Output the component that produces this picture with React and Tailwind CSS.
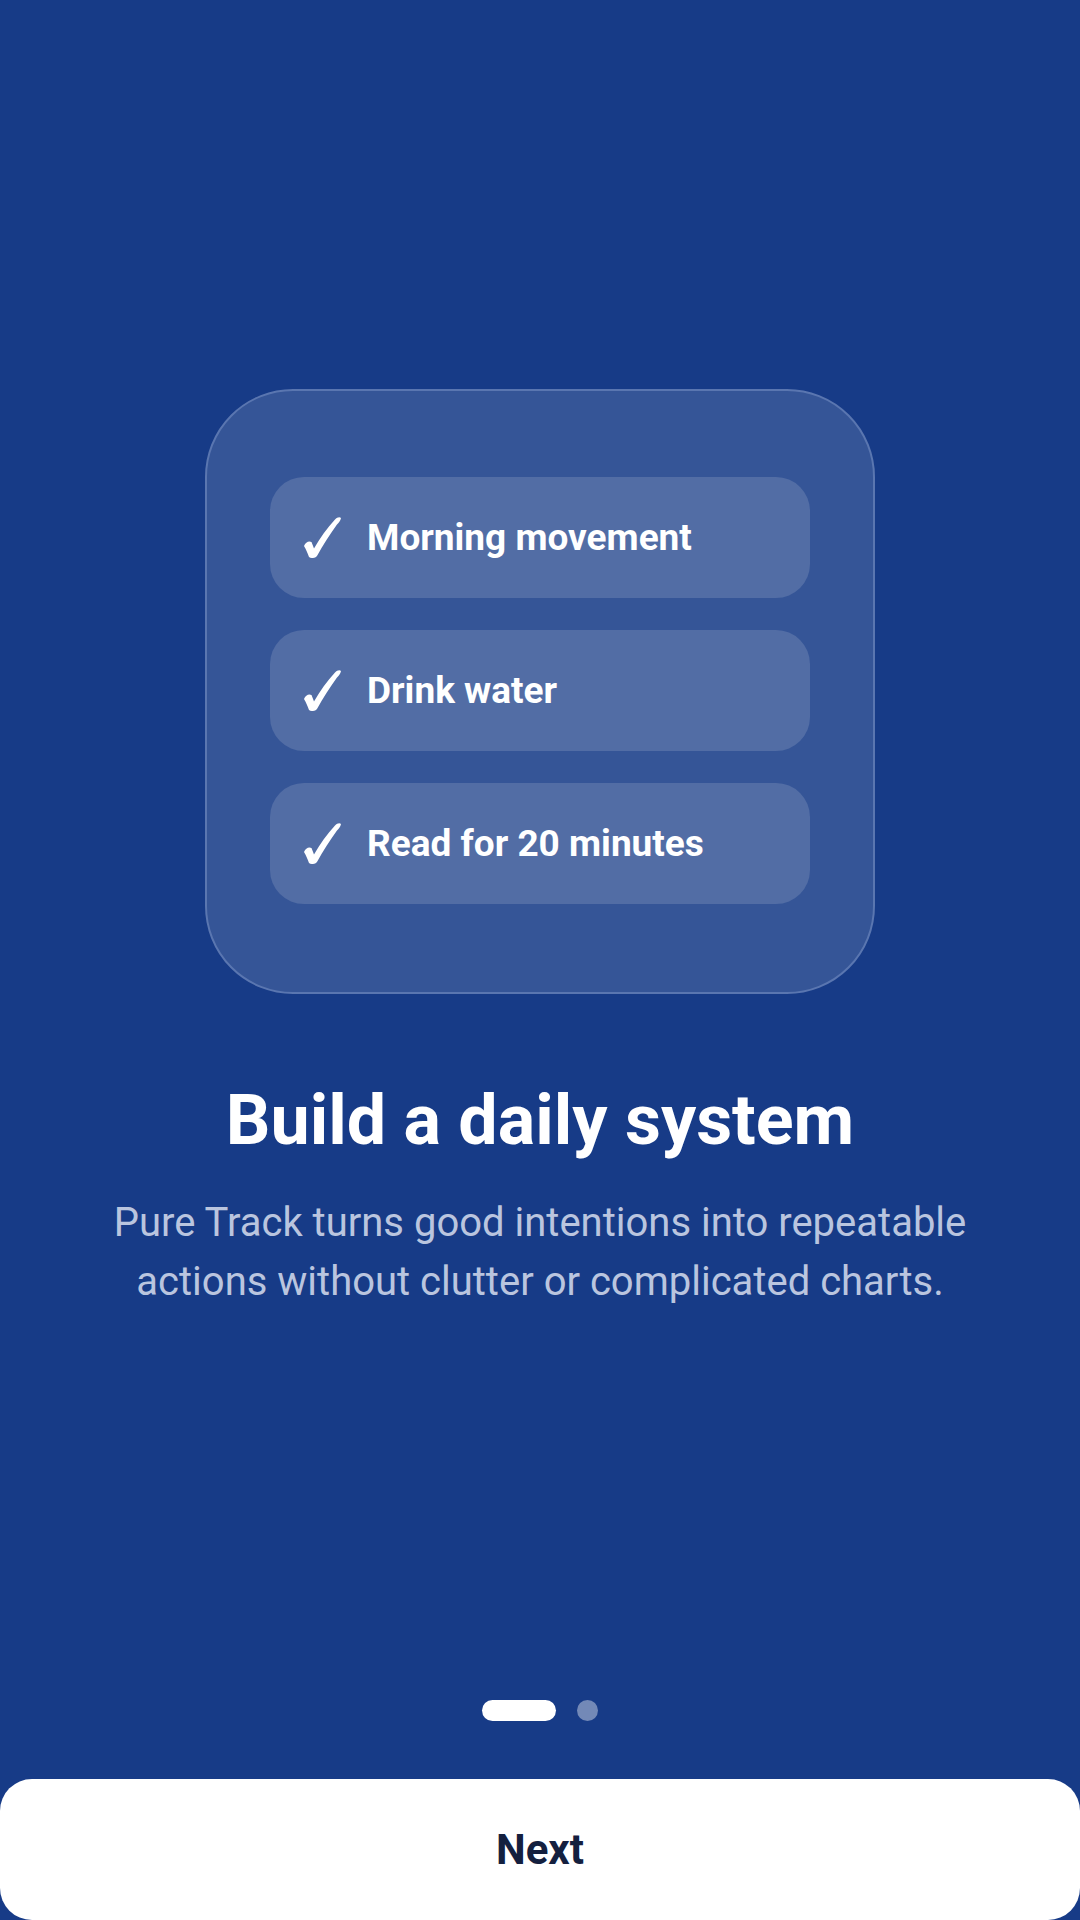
import React from "react";

const items = ["Morning movement", "Drink water", "Read for 20 minutes"];

function Check() {
  return (
    <svg width="37" height="41" viewBox="0 0 37 41" className="shrink-0">
      <path
        d="M5 40 C3.5 36 2 32 0 29 C1.5 25 5 23.5 7.5 25 C8.5 27.5 9.3 29.5 10 31.5 C16 21 23 11 31 2.5 C33 0.5 35.5 -0.3 37 1 C36.5 4 34.5 6 33 7.5 C26 17 19 28 13 39 C11 41.5 7 41.5 5 40 Z"
        fill="white"
      />
    </svg>
  );
}

export default function App() {
  return (
    <div
      className="w-[1080px] h-[1920px] bg-[#173b87] flex flex-col overflow-hidden"
      style={{ fontFamily: "Roboto, 'Noto Sans', sans-serif" }}
    >
      <div className="flex-1 flex flex-col items-center pt-[389px]">
        <div className="w-[670px] rounded-[88px] bg-[#355597] border-2 border-[#5a76b0] px-[63px] pt-[86px] pb-[88px] flex flex-col gap-[32px]">
          {items.map((t) => (
            <div
              key={t}
              className="h-[121px] rounded-[34px] bg-[#526da5] flex items-center pl-[34px]"
            >
              <Check />
              <span className="ml-[26px] text-[37px] font-bold text-white leading-none">
                {t}
              </span>
            </div>
          ))}
        </div>
        <h1 className="mt-[91px] text-[70px] font-bold text-white leading-[70px] text-center">
          Build a daily system
        </h1>
        <p className="mt-[38px] w-[920px] text-[40px] leading-[59px] text-center text-[#bac5df]">
          Pure Track turns good intentions into repeatable actions without
          clutter or complicated charts.
        </p>
      </div>
      <div className="flex items-center justify-center gap-[21px]">
        <div className="w-[74px] h-[21px] rounded-full bg-white" />
        <div className="w-[21px] h-[21px] rounded-full bg-white/40" />
      </div>
      <button className="mt-[58px] h-[141px] w-full rounded-[32px] bg-white text-[#14203f] text-[42px] font-bold flex items-center justify-center">
        Next
      </button>
    </div>
  );
}
